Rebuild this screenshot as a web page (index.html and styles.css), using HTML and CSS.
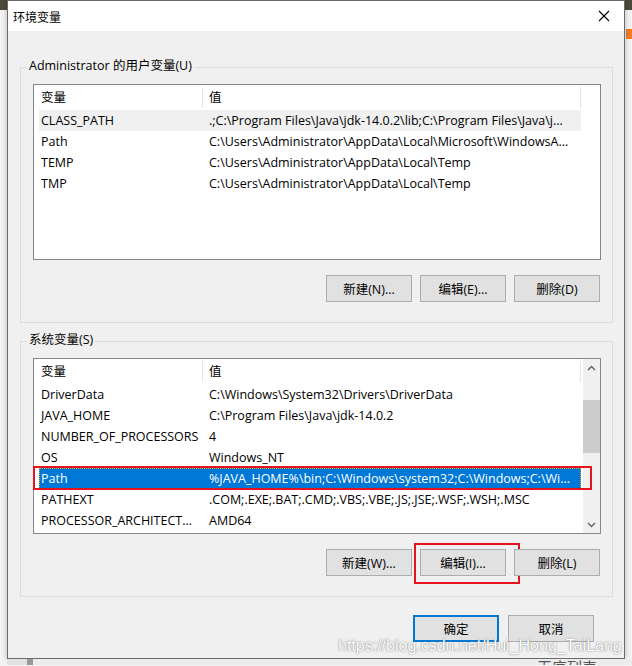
FILE: index.html
```html
<!DOCTYPE html>
<html lang="zh-CN">
<head>
<meta charset="utf-8">
<title>环境变量</title>
<link rel="stylesheet" href="styles.css">
</head>
<body>
<div class="desk">
  <div class="dialog">
    <div class="titlebar">
      <span class="title">环境变量</span>
      <svg class="close" width="12" height="12" viewBox="0 0 12 12"><path d="M1 1 L11 11 M11 1 L1 11" stroke="#000" stroke-width="1.1" fill="none"/></svg>
    </div>
    <div class="content">
      <div class="group">
        <div class="legend">Administrator 的用户变量(U)</div>
        <div class="list">
          <div class="table">
            <div class="head">
              <div class="hc hc1">变量</div>
              <div class="hc hc2">值</div>
            </div>
            <div class="row hover"><div class="c1">CLASS_PATH</div><div class="c2">.;C:\Program Files\Java\jdk-14.0.2\lib;C:\Program Files\Java\j...</div></div>
            <div class="row"><div class="c1">Path</div><div class="c2">C:\Users\Administrator\AppData\Local\Microsoft\WindowsA...</div></div>
            <div class="row"><div class="c1">TEMP</div><div class="c2">C:\Users\Administrator\AppData\Local\Temp</div></div>
            <div class="row"><div class="c1">TMP</div><div class="c2">C:\Users\Administrator\AppData\Local\Temp</div></div>
          </div>
        </div>
        <div class="buttons">
          <div class="btn">新建(N)...</div>
          <div class="btn">编辑(E)...</div>
          <div class="btn">删除(D)</div>
        </div>
      </div>

      <div class="group group2">
        <div class="legend">系统变量(S)</div>
        <div class="list">
          <div class="table">
            <div class="head">
              <div class="hc hc1">变量</div>
              <div class="hc hc2">值</div>
            </div>
            <div class="row"><div class="c1">DriverData</div><div class="c2">C:\Windows\System32\Drivers\DriverData</div></div>
            <div class="row"><div class="c1">JAVA_HOME</div><div class="c2">C:\Program Files\Java\jdk-14.0.2</div></div>
            <div class="row"><div class="c1">NUMBER_OF_PROCESSORS</div><div class="c2">4</div></div>
            <div class="row"><div class="c1">OS</div><div class="c2">Windows_NT</div></div>
            <div class="row selected"><div class="c1">Path</div><div class="c2">%JAVA_HOME%\bin;C:\Windows\system32;C:\Windows;C:\Wi...</div>
              <div class="mark mark-row"></div>
            </div>
            <div class="row"><div class="c1">PATHEXT</div><div class="c2">.COM;.EXE;.BAT;.CMD;.VBS;.VBE;.JS;.JSE;.WSF;.WSH;.MSC</div></div>
            <div class="row"><div class="c1">PROCESSOR_ARCHITECT...</div><div class="c2">AMD64</div></div>
          </div>
          <div class="scrollbar">
            <div class="sb-btn"><svg width="9" height="6" viewBox="0 0 9 6"><path d="M1 5 L4.5 1.5 L8 5" stroke="#606060" stroke-width="1.4" fill="none"/></svg></div>
            <div class="sb-track"><div class="sb-thumb"></div></div>
            <div class="sb-btn"><svg width="9" height="6" viewBox="0 0 9 6"><path d="M1 1 L4.5 4.5 L8 1" stroke="#606060" stroke-width="1.4" fill="none"/></svg></div>
          </div>
        </div>
        <div class="buttons">
          <div class="btn">新建(W)...</div>
          <div class="btn btn-marked">编辑(I)...<div class="mark mark-btn"></div></div>
          <div class="btn">删除(L)</div>
        </div>
      </div>

      <div class="footer">
        <div class="btn btn-default">确定</div>
        <div class="btn">取消</div>
      </div>
    </div>
    <div class="watermark">https://blog.csdn.net/Hui_Hong_TaiLang</div>
  </div>
  <div class="below"><span class="below-text">无序列表</span></div>
</div>
</body>
</html>
```
FILE: styles.css
```css
* { box-sizing: border-box; }

html, body {
  margin: 0;
  padding: 0;
}

body {
  width: 632px;
  height: 666px;
  overflow: hidden;
  background:
    linear-gradient(#4b4a3c, #4b4a3c) 0 0 / 632px 10px no-repeat,
    linear-gradient(#ef7d2a, #ef7d2a) 626px 29px / 6px 10px no-repeat,
    #f4f4f4;
  font-family: "Open Sans", "Noto Sans CJK SC", sans-serif;
  font-size: 12.5px;
  color: #000;
}

.desk {
  padding-left: 7px;
}

.dialog {
  position: relative;
  width: 618px;
  height: 659px;
  border: 1px solid #6b6b6b;
  background: #f0f0f0;
  box-shadow: 0 0 6px rgba(0, 0, 0, 0.25);
}

.titlebar {
  height: 30px;
  background: #fff;
  display: flex;
  align-items: center;
  justify-content: space-between;
  padding: 0 14px 0 5px;
}

.title {
  font-family: "Noto Sans CJK SC", sans-serif;
  font-size: 12px;
}

.close {
  display: block;
}

.content {
  padding-top: 36px;
}

.group {
  margin-left: 12px;
  width: 593px;
  height: 256px;
  border: 1px solid #dcdcdc;
  display: flex;
  flex-direction: column;
}

.group2 {
  margin-top: 18px;
}

.legend {
  align-self: flex-start;
  margin-top: -10px;
  margin-left: 6px;
  padding: 0 2px;
  height: 16px;
  line-height: 16px;
  background: #f0f0f0;
}

.list {
  position: relative;
  margin: 10px 11px 0 12px;
  height: 176px;
  border: 1px solid #828790;
  background: #fff;
  display: flex;
  padding-left: 5px;
}

.table {
  width: 542px;
  display: flex;
  flex-direction: column;
}

.head {
  height: 25px;
  display: flex;
  padding-top: 2px;
}

.hc {
  height: 21px;
  line-height: 21px;
  border-right: 1px solid #e5e5e5;
}

.hc1 {
  width: 164px;
  padding-left: 2px;
}

.hc2 {
  flex: 1;
  padding-left: 6px;
}

.row {
  position: relative;
  height: 21px;
  line-height: 21px;
  display: flex;
  white-space: nowrap;
}

.row.hover {
  background: #f0f0f0;
}

.row.selected {
  background: #0078d7;
  color: #fff;
  outline: 1px dotted #f0a030;
  outline-offset: -1px;
}

.c1 {
  width: 168px;
  padding-left: 2px;
  overflow: hidden;
}

.c2 {
  flex: 1;
  padding-left: 2px;
  overflow: hidden;
}

.scrollbar {
  margin-left: auto;
  width: 17px;
  background: #f0f0f0;
  display: flex;
  flex-direction: column;
}

.sb-btn {
  height: 17px;
  display: flex;
  align-items: center;
  justify-content: center;
}

.sb-track {
  flex: 1;
  padding-top: 24px;
}

.sb-thumb {
  height: 53px;
  background: #cdcdcd;
}

.buttons {
  display: flex;
  justify-content: flex-end;
  gap: 8px;
  margin: 15px 12px 0 0;
}

.btn {
  position: relative;
  width: 86px;
  height: 27px;
  border: 1px solid #adadad;
  background: #e1e1e1;
  display: flex;
  align-items: center;
  justify-content: center;
}

.btn-default {
  border: 2px solid #0078d7;
}

.footer {
  display: flex;
  justify-content: flex-end;
  gap: 9px;
  margin: 18px 30px 0 0;
}

.mark {
  position: absolute;
  border: 2px solid #e3141f;
  pointer-events: none;
}

.mark-row {
  left: -6px;
  top: -2px;
  width: 559px;
  height: 24px;
}

.mark-btn {
  left: -7px;
  top: -7px;
  width: 106px;
  height: 41px;
}

.watermark {
  position: absolute;
  left: 330px;
  top: 636px;
  font-family: "Liberation Sans", Arial, sans-serif;
  font-size: 16px;
  color: #ffffff;
  text-shadow: 0 0 1px rgba(110, 110, 110, 0.9), 0 0 2px rgba(140, 140, 140, 0.6);
  white-space: nowrap;
}

.below {
  height: 6px;
  overflow: hidden;
  position: relative;
  background: linear-gradient(90deg, #e2e2e2 0 20px, #999 20px 26px, #ececec 26px);
}

.below-text {
  display: block;
  padding-left: 530px;
  font-family: "Noto Sans CJK SC", sans-serif;
  font-size: 15px;
  line-height: 1;
  color: #555;
}
```
